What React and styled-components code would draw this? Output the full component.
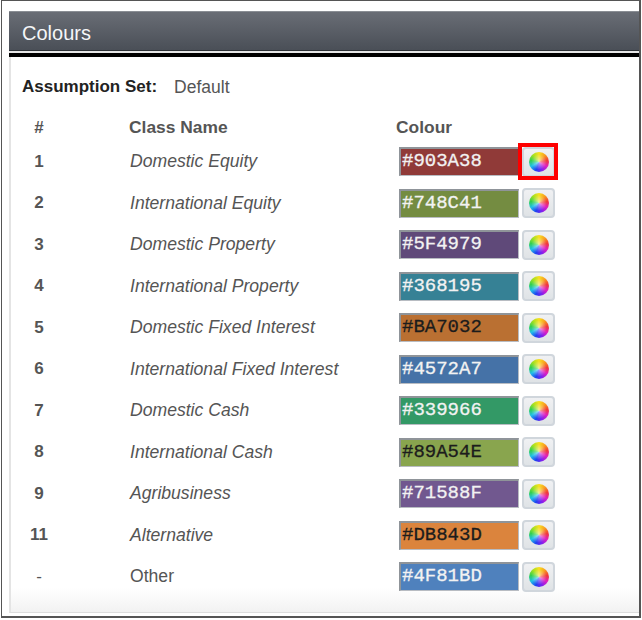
import styled, { createGlobalStyle } from 'styled-components';

const classes = [
  { num: '1', name: 'Domestic Equity', hex: '#903A38', picked: true },
  { num: '2', name: 'International Equity', hex: '#748C41' },
  { num: '3', name: 'Domestic Property', hex: '#5F4979' },
  { num: '4', name: 'International Property', hex: '#368195' },
  { num: '5', name: 'Domestic Fixed Interest', hex: '#BA7032' },
  { num: '6', name: 'International Fixed Interest', hex: '#4572A7' },
  { num: '7', name: 'Domestic Cash', hex: '#339966' },
  { num: '8', name: 'International Cash', hex: '#89A54E' },
  { num: '9', name: 'Agribusiness', hex: '#71588F' },
  { num: '11', name: 'Alternative', hex: '#DB843D' },
  { num: '-', name: 'Other', hex: '#4F81BD', plain: true },
];

// dark swatches get light text, the orange/green ones get dark text
const darkText = ['#BA7032', '#89A54E', '#DB843D'];

const GlobalStyle = createGlobalStyle`
  html, body {
    margin: 0;
    background: #ffffff;
  }
  body {
    font-family: 'Liberation Sans', Arial, sans-serif;
  }
`;

const Frame = styled.div`
  box-sizing: border-box;
  width: 640px;
  height: 618px;
  margin-left: 1px;
  padding: 10px 0 3px 7px;
  border: 1px solid #555555;
  border-width: 1px 2px 2px 1px;
`;

const Panel = styled.div`
  box-sizing: border-box;
  height: 100%;
  border-left: 2px solid #e4e4e4;
  border-bottom: 1px solid #dddddd;
  background: linear-gradient(to bottom, #ffffff 96%, #f2f2f2 100%);
`;

const Header = styled.div`
  box-sizing: border-box;
  height: 46px;
  margin-left: -2px;
  padding: 9px 0 0 13px;
  border-top: 1px solid #8a8e94;
  border-bottom: 4px solid #000000;
  background: linear-gradient(
    to bottom,
    #696d75,
    #4a4f57 38px,
    #2f3338 38px,
    #2f3338 39px,
    #e6e6e6 39px
  );
  color: #f4f6f8;
  font-size: 20px;
  line-height: 24px;
`;

const Assumption = styled.div`
  display: flex;
  gap: 17px;
  padding: 20px 0 0 11px;
  line-height: 20px;
`;

const AssumptionLabel = styled.span`
  color: #222222;
  font-size: 17px;
  font-weight: bold;
`;

const AssumptionValue = styled.span`
  color: #555555;
  font-size: 17.5px;
`;

const Table = styled.div`
  margin-top: 17px;
`;

const Row = styled.div`
  display: grid;
  grid-template-columns: 106px 269px 120px auto;
  align-items: center;
  height: ${(props) => (props.$head ? '27px' : '41.5px')};
  padding-left: 13px;
  font-size: 17.6px;
  color: #555555;
`;

const Head = styled.span`
  margin-left: ${(props) => props.$shift || 0}px;
  font-size: 17.4px;
  font-weight: bold;
`;

const Num = styled.span`
  width: 30px;
  text-align: center;
  font-size: 17px;
  font-weight: ${(props) => (props.$plain ? 'normal' : 'bold')};
`;

const Name = styled.span`
  font-style: ${(props) => (props.$plain ? 'normal' : 'italic')};
`;

const Swatch = styled.div`
  box-sizing: border-box;
  height: 29px;
  padding-left: 1px;
  border: 1px solid #8f9499;
  border-right-color: #b8bcc2;
  border-bottom-color: #b8bcc2;
  border-width: 2px 1px 1px 2px;
  background: ${(props) => props.$color};
  color: ${(props) => (props.$dark ? '#1c1c1c' : '#f2f2f2')};
  -webkit-text-stroke: 0.3px currentColor;
  font-family: 'Liberation Mono', 'Courier New', monospace;
  font-size: 19px;
  line-height: 25px;
`;

const PickerCell = styled.div`
  margin-left: 3px;
  position: relative;
`;

const PickerButton = styled.div`
  box-sizing: border-box;
  display: flex;
  align-items: center;
  justify-content: center;
  width: 33px;
  height: 30px;
  border: 2px solid #d0d6dc;
  border-radius: 4px;
  background: linear-gradient(to bottom, #f0f1f3, #dfe3e6);
`;

const Highlight = styled.div`
  position: absolute;
  top: -4px;
  left: -4px;
  width: 32px;
  height: 29px;
  border: 4px solid #fe0000;
`;

const Wheel = styled.div`
  width: 20px;
  height: 20px;
  border-radius: 50%;
  filter: blur(0.4px);
  background:
    radial-gradient(circle, rgba(255, 255, 255, 0.6) 0%, rgba(255, 255, 255, 0) 55%),
    conic-gradient(#f8e020, #f8a020, #f03838, #e020c0, #8020f0, #2040f0, #20c0e8, #30d050, #a8e020, #f8e020);
`;

export default function App() {
  return (
    <Frame>
      <GlobalStyle />
      <Panel>
        <Header>Colours</Header>
        <Assumption>
          <AssumptionLabel>Assumption Set:</AssumptionLabel>
          <AssumptionValue>Default</AssumptionValue>
        </Assumption>
        <Table>
          <Row $head>
            <Num>#</Num>
            <Head $shift={-1}>Class Name</Head>
            <Head $shift={-3}>Colour</Head>
          </Row>
          {classes.map((item) => (
            <Row key={item.num}>
              <Num $plain={item.plain}>{item.num}</Num>
              <Name $plain={item.plain}>{item.name}</Name>
              <Swatch $color={item.hex} $dark={darkText.includes(item.hex)}>
                {item.hex}
              </Swatch>
              <PickerCell>
                <PickerButton>
                  <Wheel />
                </PickerButton>
                {item.picked && <Highlight />}
              </PickerCell>
            </Row>
          ))}
        </Table>
      </Panel>
    </Frame>
  );
}
